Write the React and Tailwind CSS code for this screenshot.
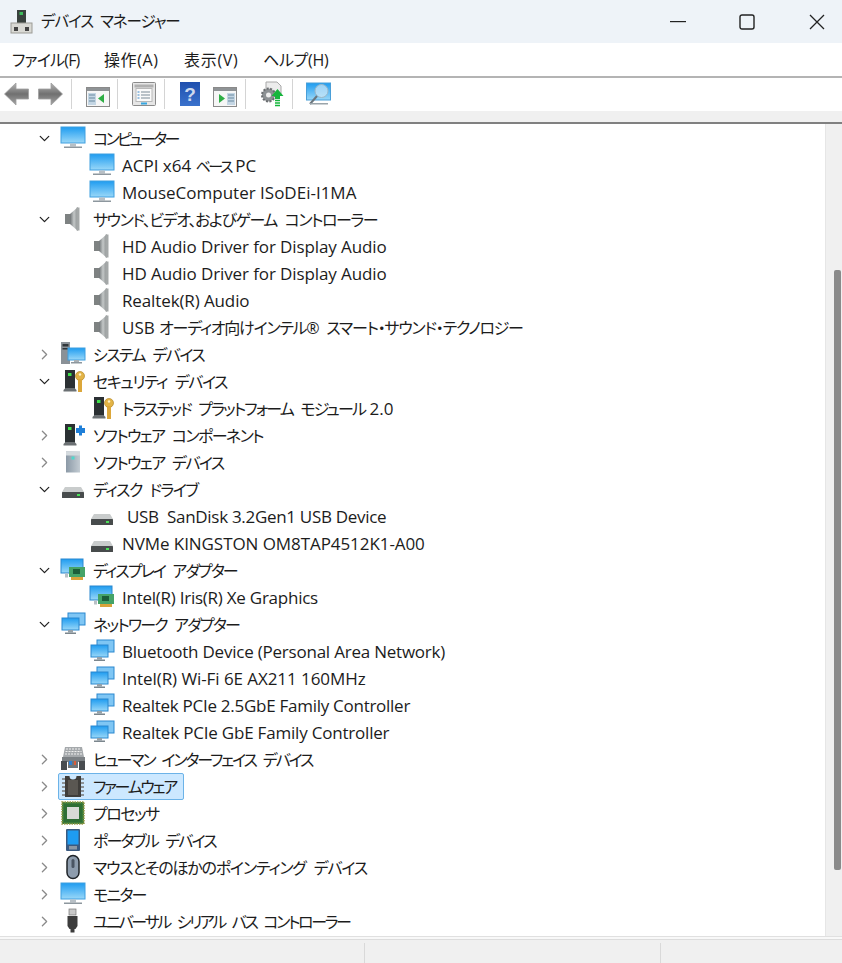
import React from "react";
import { ChevronDown, ChevronRight } from "lucide-react";

const Defs = () => (
  <svg width="0" height="0" className="absolute">
    <defs>
      <linearGradient id="scr" x1="0" y1="0" x2="0" y2="1">
        <stop offset="0" stopColor="#1f9cf0" />
        <stop offset="0.55" stopColor="#62bdf5" />
        <stop offset="1" stopColor="#9ad8f8" />
      </linearGradient>
      <linearGradient id="metal" x1="0" y1="0" x2="1" y2="0">
        <stop offset="0" stopColor="#6f7476" />
        <stop offset="0.5" stopColor="#c4c8c8" />
        <stop offset="1" stopColor="#85898a" />
      </linearGradient>
      <linearGradient id="arrow" x1="0" y1="0" x2="0" y2="1">
        <stop offset="0" stopColor="#b5b5b5" />
        <stop offset="0.5" stopColor="#707070" />
        <stop offset="1" stopColor="#a5a5a5" />
      </linearGradient>
      <linearGradient id="tower" x1="0" y1="0" x2="1" y2="0">
        <stop offset="0" stopColor="#8b99a6" />
        <stop offset="1" stopColor="#c3ccd3" />
      </linearGradient>
      <linearGradient id="help" x1="0" y1="0" x2="0" y2="1">
        <stop offset="0" stopColor="#1f4fae" />
        <stop offset="1" stopColor="#3a72cc" />
      </linearGradient>
    </defs>
  </svg>
);

const Box = ({ children, w = 26, h = 26 }) => (
  <svg width={w} height={h} viewBox={`0 0 ${w} ${h}`} className="shrink-0">
    {children}
  </svg>
);

const Monitor = () => (
  <Box>
    <rect x="1" y="2" width="24" height="16" fill="url(#scr)" stroke="#3f9fe0" strokeWidth="1" />
    <rect x="10" y="18.500" width="6" height="3" fill="#b8c0c6" />
    <rect x="4" y="21.500" width="18" height="1.500" fill="#8d979e" />
  </Box>
);

const Speaker = () => (
  <Box>
    <path d="M5 8h5v10H5z" fill="#7e8282" />
    <path d="M10 8l8-7v24l-8-7z" fill="url(#metal)" />
    <path d="M16.500 1.500h3v23h-3z" fill="#a4a8a8" />
  </Box>
);

const SystemIcon = () => (
  <Box>
    <rect x="1" y="1" width="9" height="22" fill="#8a9197" />
    <rect x="2.500" y="3" width="6" height="2.500" fill="#30363a" />
    <rect x="2.500" y="7" width="6" height="1.500" fill="#30363a" />
    <rect x="8" y="7" width="17" height="12" fill="url(#scr)" stroke="#3f9fe0" />
    <rect x="14" y="19" width="5" height="2" fill="#a8b0b5" />
    <rect x="11" y="21" width="11" height="1.500" fill="#8d979e" />
  </Box>
);

const Tower = ({ color = "#2b3033" }) => (
  <g>
    <rect x="5" y="2" width="10" height="20" fill={color} />
    <rect x="8" y="5" width="3.500" height="3" fill="#3ee04a" />
    <path d="M3.500 22l2-2h9l2 2v1.500h-13z" fill="#6b7073" />
  </g>
);

const Key = () => (
  <g>
    <circle cx="20" cy="8" r="4.500" fill="#e3b447" stroke="#b58a2a" strokeWidth="0.700" />
    <rect x="18" y="11" width="4" height="13" fill="#dca73a" />
    <circle cx="20" cy="6.500" r="1.200" fill="#fff3c8" />
  </g>
);

const Security = () => (
  <Box>
    <Tower />
    <Key />
  </Box>
);

const SoftwareComp = () => (
  <Box>
    <Tower />
    <path d="M16 6h3V3.500h3V6h3v5h-3v2.500h-3V11h-3z" fill="#1f7fd8" />
  </Box>
);

const SoftwareDev = () => (
  <Box>
    <path d="M6 2.500h14v21H6z" fill="url(#tower)" />
    <rect x="6" y="2.500" width="14" height="4" fill="#d4dade" />
    <rect x="11.500" y="7.500" width="3" height="3" fill="#4fd8cc" />
  </Box>
);

const Disk = () => (
  <Box>
    <path d="M5 11h16l3 5H2z" fill="#c9cccc" />
    <rect x="2" y="16" width="22" height="6" rx="0.500" fill="#474b4c" />
    <rect x="17" y="18" width="3" height="2" fill="#4be058" />
  </Box>
);

const Display = () => (
  <Box>
    <rect x="1" y="2" width="22" height="14" fill="url(#scr)" stroke="#2a88cf" />
    <rect x="9" y="10" width="16" height="10" fill="#45a368" />
    <rect x="13" y="12" width="7" height="5" fill="#1c5e3a" />
    <rect x="11" y="20" width="12" height="3" fill="#d9a33a" />
    <rect x="5" y="16.500" width="3" height="4" fill="#b8c0c6" />
  </Box>
);

const Network = () => (
  <Box>
    <rect x="8" y="2" width="17" height="12" fill="#7fc6f4" stroke="#2a88cf" />
    <rect x="2" y="7" width="17" height="12" fill="url(#scr)" stroke="#2a88cf" />
    <rect x="8" y="19" width="5" height="2.500" fill="#96a2aa" />
    <rect x="5" y="21.500" width="11" height="1.500" fill="#7b868d" />
  </Box>
);

const Hid = () => (
  <Box>
    <path d="M5 1h17l2 10H3z" fill="#a5a9ac" />
    <path d="M6 3h15M5.500 5.500h16M5 8h17" stroke="#f0f0f0" strokeWidth="1" strokeDasharray="2 1" />
    <rect x="2" y="11" width="23" height="5" fill="#7b8084" />
    <path d="M1 15h6v9H1zM19 15h6v9h-6z" fill="#484c50" />
    <rect x="8" y="15" width="10" height="7" fill="#6f7478" />
    <rect x="9" y="15" width="3" height="4" fill="#2f7fd0" />
    <rect x="14" y="15" width="2" height="4" fill="#d95a3a" />
  </Box>
);

const Firmware = () => (
  <Box>
    <path d="M5 3h4.500a3.500 3.500 0 0 0 7 0H21v21H5z" fill="#3f3d3a" />
    <rect x="8" y="7" width="10" height="15" fill="#5a5752" />
    <path d="M2 6h3M2 10h3M2 14h3M2 18h3M2 22h3M21 6h3M21 10h3M21 14h3M21 18h3M21 22h3" stroke="#777" strokeWidth="1.500" />
  </Box>
);

const Cpu = () => (
  <Box>
    <rect x="2" y="2" width="22" height="22" fill="#3e7d3a" stroke="#9a9a4a" strokeWidth="1.500" strokeDasharray="1.500 1" />
    <rect x="4" y="4" width="18" height="18" fill="#2f6e35" />
    <rect x="7" y="7" width="12" height="12" fill="#d8dad6" />
  </Box>
);

const Portable = () => (
  <Box>
    <rect x="6" y="2" width="14" height="22" rx="1" fill="#3a5a80" />
    <rect x="7.500" y="3.500" width="11" height="14" fill="#1e9cf2" />
    <rect x="9" y="19" width="8" height="3.500" fill="#8b97a3" />
  </Box>
);

const Mouse = () => (
  <Box>
    <rect x="7" y="1.500" width="12" height="23" rx="6" fill="#8d9cad" stroke="#1f2429" strokeWidth="1.500" />
    <rect x="11.500" y="5" width="3" height="9" rx="1.500" fill="#4a5563" />
  </Box>
);

const Usb = () => (
  <Box>
    <rect x="9" y="1" width="7" height="6" fill="#c8c8c8" stroke="#777" strokeWidth="0.700" />
    <path d="M7.500 8h10v10l-2 3h-6l-2-3z" fill="#3c3c3c" />
    <rect x="10.500" y="21" width="4" height="3.500" fill="#3c3c3c" />
  </Box>
);

const rows = [
  { l: 0, open: true, icon: Monitor, t: "コンピューター", c: "text-[16px] tracking-[-2.660px]" },
  { l: 1, icon: Monitor, pre: "ACPI x64 ", t: "ベース", post: " PC", c: "text-[15px] tracking-[-2.500px]" },
  { l: 1, icon: Monitor, t: "MouseComputer ISoDEi-I1MA", c: "text-[17px]" },
  { l: 0, open: true, icon: Speaker, t: "サウンド、ビデオ、およびゲーム コントローラー", c: "text-[16px] tracking-[-1.450px] [word-spacing:5px]" },
  { l: 1, icon: Speaker, t: "HD Audio Driver for Display Audio", c: "text-[17px] tracking-[-0.100px]" },
  { l: 1, icon: Speaker, t: "HD Audio Driver for Display Audio", c: "text-[17px] tracking-[-0.100px]" },
  { l: 1, icon: Speaker, t: "Realtek(R) Audio", c: "text-[17px] tracking-[-0.120px]" },
  { l: 1, icon: Speaker, pre: "USB ", t: "オーディオ向けインテル® スマート・サウンド・テクノロジー", c: "text-[16px] tracking-[-1.240px] [word-spacing:5px]" },
  { l: 0, icon: SystemIcon, t: "システム デバイス", c: "text-[16px] tracking-[-1.600px] [word-spacing:5px]" },
  { l: 0, open: true, icon: Security, t: "セキュリティ デバイス", c: "text-[16px] tracking-[-1.450px] [word-spacing:5px]" },
  { l: 1, icon: Security, t: "トラステッド プラットフォーム モジュール", post: " 2.0", c: "text-[16px] tracking-[-1.850px] [word-spacing:5px]" },
  { l: 0, icon: SoftwareComp, t: "ソフトウェア コンポーネント", c: "text-[16px] tracking-[-1.650px] [word-spacing:5px]" },
  { l: 0, icon: SoftwareDev, t: "ソフトウェア デバイス", c: "text-[16px] tracking-[-1.630px] [word-spacing:5px]" },
  { l: 0, open: true, icon: Disk, t: "ディスク ドライブ", c: "text-[16px] tracking-[-1.550px] [word-spacing:5px]" },
  { l: 1, icon: Disk, t: "USB  SanDisk 3.2Gen1 USB Device", extra: true, c: "text-[17px] tracking-[-0.300px]" },
  { l: 1, icon: Disk, t: "NVMe KINGSTON OM8TAP4512K1-A00", c: "text-[17px] tracking-[-0.070px]" },
  { l: 0, open: true, icon: Display, t: "ディスプレイ アダプター", c: "text-[16px] tracking-[-1.900px] [word-spacing:5px]" },
  { l: 1, icon: Display, t: "Intel(R) Iris(R) Xe Graphics", c: "text-[17px] tracking-[-0.250px]" },
  { l: 0, open: true, icon: Network, t: "ネットワーク アダプター", c: "text-[16px] tracking-[-1.800px] [word-spacing:5px]" },
  { l: 1, icon: Network, t: "Bluetooth Device (Personal Area Network)", c: "text-[17px] tracking-[-0.220px]" },
  { l: 1, icon: Network, t: "Intel(R) Wi-Fi 6E AX211 160MHz", c: "text-[17px] tracking-[-0.070px]" },
  { l: 1, icon: Network, t: "Realtek PCIe 2.5GbE Family Controller", c: "text-[17px] tracking-[-0.270px]" },
  { l: 1, icon: Network, t: "Realtek PCIe GbE Family Controller", c: "text-[17px] tracking-[-0.200px]" },
  { l: 0, icon: Hid, t: "ヒューマン インターフェイス デバイス", c: "text-[16px] tracking-[-2.150px] [word-spacing:5px]" },
  { l: 0, icon: Firmware, t: "ファームウェア", sel: true, c: "text-[16px] tracking-[-2.300px]" },
  { l: 0, icon: Cpu, t: "プロセッサ", c: "text-[16px] tracking-[-1.500px]" },
  { l: 0, icon: Portable, t: "ポータブル デバイス", c: "text-[16px] tracking-[-1.850px] [word-spacing:5px]" },
  { l: 0, icon: Mouse, t: "マウスとそのほかのポインティング デバイス", c: "text-[16px] tracking-[-1.200px] [word-spacing:5px]" },
  { l: 0, icon: Monitor, t: "モニター", c: "text-[16px] tracking-[-1.750px]" },
  { l: 0, icon: Usb, t: "ユニバーサル シリアル バス コントローラー", c: "text-[16px] tracking-[-2.350px] [word-spacing:5px]" },
];

const Label = ({ r }) => (
  <span className={`whitespace-pre text-[17px] leading-none text-[#1c1c1c] ${r.extra ? "ml-[5px]" : ""}`}>
    {r.pre}
    <span className={r.c}>{r.t}</span>
    {r.post}
  </span>
);

const Row = ({ r }) => {
  const Icon = r.icon;
  if (r.l === 1) {
    return (
      <div className="flex h-[27.03px] items-center pl-[89px]">
        <Icon />
        <div className="w-[7px] shrink-0" />
        <Label r={r} />
      </div>
    );
  }
  return (
    <div className="flex h-[27.03px] items-center pl-[36px]">
      <div className="flex w-[24px] shrink-0 items-center">
        {r.open ? (
          <ChevronDown size={17} strokeWidth={1.8} className="text-[#222]" />
        ) : (
          <ChevronRight size={17} strokeWidth={1.8} className="text-[#8a8a8a]" />
        )}
      </div>
      <div
        className={`flex h-[27px] items-center ${
          r.sel ? "rounded-[2px] border border-[#6cb3e8] bg-[#cce8ff] -ml-[2px] pl-[1px] pr-[7px]" : "pr-[5px]"
        }`}
      >
        <Icon />
        <div className="w-[7px] shrink-0" />
        <Label r={r} />
      </div>
    </div>
  );
};

const Sep = ({ ml, mr }) => <div className={`h-[30px] w-px shrink-0 bg-[#d4d4d4] ${ml} ${mr}`} />;

const Back = ({ flip }) => (
  <svg width="25" height="24" viewBox="0 0 25 24" className={`shrink-0 ${flip ? "-scale-x-100" : ""}`}>
    <path d="M0.500 12L12 1v6h12.500v10H12v6z" fill="url(#arrow)" stroke="#a0a0a0" strokeWidth="0.800" />
  </svg>
);

const Win = ({ arrow }) => (
  <svg width="24" height="24" viewBox="0 0 24 24" className="mt-[4px] shrink-0">
    <rect x="0.500" y="3.500" width="23" height="19" fill="#f6f6f6" stroke="#8a8a8a" />
    <rect x="1" y="4" width="22" height="3" fill="#8f9396" />
    {arrow === "l" ? (
      <>
        <path d="M2 9h8v12H2z" fill="#c4d6e4" />
        <path d="M3 11h6M3 14h6M3 17h6" stroke="#6a8aa0" />
        <path d="M18 10v9l-6-4.500z" fill="#2fae45" />
      </>
    ) : (
      <>
        <path d="M14 9h8v12h-8z" fill="#c4d6e4" />
        <path d="M15 11h6M15 14h6M15 17h6" stroke="#6a8aa0" />
        <path d="M6 10v9l6-4.500z" fill="#2fae45" />
      </>
    )}
  </svg>
);

const Props = () => (
  <svg width="24" height="24" viewBox="0 0 24 24" className="shrink-0">
    <rect x="0.500" y="0.500" width="23" height="23" rx="1" fill="#e6e6e6" stroke="#8a8a8a" />
    <rect x="2.500" y="2.500" width="19" height="3" fill="#b0b0b0" />
    <rect x="4" y="6.500" width="16" height="13" fill="#fafafa" stroke="#b8b8b8" />
    <path d="M9 10h9M9 13h9M9 16h9" stroke="#7a8a96" />
    <path d="M5.500 10h2M5.500 13h2M5.500 16h2" stroke="#3a86c8" />
    <rect x="9" y="20.500" width="6" height="2" fill="#36a6e0" />
  </svg>
);

const Help = () => (
  <svg width="20" height="24" viewBox="0 0 20 24" className="shrink-0">
    <rect width="20" height="24" fill="url(#help)" />
    <text x="10" y="19" textAnchor="middle" fontSize="19" fontWeight="700" fill="#cdd9ee" fontFamily="Liberation Sans">?</text>
  </svg>
);

const Update = () => (
  <svg width="24" height="26" viewBox="0 0 24 26" className="shrink-0">
    <path d="M6 1h11l4 4v8H6z" fill="#ececec" stroke="#a8a8a8" />
    <circle cx="8.500" cy="14" r="6.500" fill="#8d9194" stroke="#6a6d70" strokeDasharray="2 1.500" strokeWidth="2" />
    <circle cx="8.500" cy="14" r="2.500" fill="#eee" />
    <path d="M17.500 8l6 7H20v3h-5v-3h-3.500z" fill="#16b53c" />
    <path d="M15 19.500h5M15 22h5M15 24.500h5" stroke="#16b53c" strokeWidth="1.500" />
  </svg>
);

const Scan = () => (
  <svg width="25" height="24" viewBox="0 0 25 24" className="shrink-0">
    <rect x="0.500" y="1" width="24" height="17" fill="url(#scr)" stroke="#4a9fd8" />
    <circle cx="15.500" cy="9" r="6.500" fill="#cfe8f8" fillOpacity="0.700" stroke="#9db8c8" />
    <path d="M11 14l-7 8" stroke="#6a767e" strokeWidth="2" />
    <rect x="4" y="21" width="18" height="1.500" fill="#9aa4aa" />
  </svg>
);

const AppIcon = () => (
  <svg width="24" height="25" viewBox="0 0 24 25" className="shrink-0">
    <rect x="8" y="1" width="9" height="13" fill="#39413d" />
    <rect x="10.500" y="3" width="3.500" height="3" fill="#3dbb5c" />
    <rect x="2" y="14" width="21" height="10" fill="#d9d9d4" stroke="#9b9b96" />
    <rect x="5" y="18" width="4" height="4" fill="#444" />
    <rect x="16" y="18" width="4" height="4" fill="#444" />
  </svg>
);

export default function App() {
  return (
    <div
      className="flex h-[963px] w-[842px] flex-col overflow-hidden bg-white text-[#1c1c1c] [font-feature-settings:'palt']"
      style={{ fontFamily: '"Open Sans","Noto Sans CJK JP",sans-serif' }}
    >
      <Defs />
      {/* Title bar */}
      <div className="flex h-[43px] shrink-0 items-center bg-[#eef3f8] pl-[9px]">
        <AppIcon />
        <span className="ml-[8px] text-[15.500px] leading-none tracking-[-1.060px] [word-spacing:4px]">デバイス マネージャー</span>
        <div className="ml-auto flex items-center">
          <svg width="16" height="2" viewBox="0 0 16 2"><rect width="16" height="1.200" fill="#222" /></svg>
          <svg width="16" height="16" viewBox="0 0 16 16" className="ml-[53px]"><rect x="1" y="1" width="14" height="14" rx="2" fill="none" stroke="#222" strokeWidth="1.400" /></svg>
          <svg width="16" height="16" viewBox="0 0 16 16" className="ml-[54px] mr-[17px]"><path d="M1 1l14 14M15 1L1 15" stroke="#222" strokeWidth="1.300" /></svg>
        </div>
      </div>
      {/* Menu bar */}
      <div className="flex h-[33px] shrink-0 items-center bg-white pl-[12px] text-[16px] leading-none">
        <span className="w-[68px] tracking-[-0.800px]">ファイル(F)</span>
        <span className="ml-[24px] w-[56px] tracking-[0.600px]">操作(A)</span>
        <span className="ml-[24px] w-[56px] tracking-[0.700px]">表示(V)</span>
        <span className="ml-[23px] tracking-[-0.300px]">ヘルプ(H)</span>
      </div>
      <div className="h-[1.500px] shrink-0 bg-[#b4b4b4]" />
      {/* Toolbar */}
      <div className="flex h-[33.500px] shrink-0 items-center bg-white pl-[4px]">
        <Back />
        <div className="w-[9px] shrink-0" />
        <Back flip />
        <Sep ml="ml-[8px]" mr="mr-[14px]" />
        <Win arrow="l" />
        <Sep ml="ml-[7px]" mr="mr-[14px]" />
        <Props />
        <Sep ml="ml-[8px]" mr="mr-[15px]" />
        <Help />
        <div className="w-[13px] shrink-0" />
        <Win arrow="r" />
        <Sep ml="ml-[8px]" mr="mr-[14px]" />
        <Update />
        <Sep ml="ml-[8px]" mr="mr-[13px]" />
        <Scan />
      </div>
      <div className="h-[10.500px] shrink-0 bg-[#f0f0f0]" />
      <div className="h-[2.500px] shrink-0 bg-[#808080]" />
      {/* Tree */}
      <div className="flex min-h-0 flex-1">
        <div className="min-w-0 flex-1 overflow-hidden pt-[0.500px]">
          {rows.map((r, i) => (
            <Row key={i} r={r} />
          ))}
        </div>
        <div className="relative w-[17px] shrink-0 border-l border-[#e6e6e6] bg-[#f0f0f0]">
          <div className="absolute left-[8px] top-[146px] h-[600px] w-[7px] rounded-[2px] bg-[#8a8a8a]" />
        </div>
      </div>
      {/* Status bar */}
      <div className="h-px shrink-0 bg-[#e0e0e0]" />
      <div className="h-[2px] shrink-0 bg-[#f8f8f8]" />
      <div className="h-px shrink-0 bg-[#dcdcdc]" />
      <div className="flex h-[23px] shrink-0 items-end bg-[#f0f0f0]">
        <div className="h-[20px] w-[365px] border-r border-[#d9d9d9]" />
        <div className="h-[20px] w-[296px] border-r border-[#d9d9d9]" />
      </div>
    </div>
  );
}
